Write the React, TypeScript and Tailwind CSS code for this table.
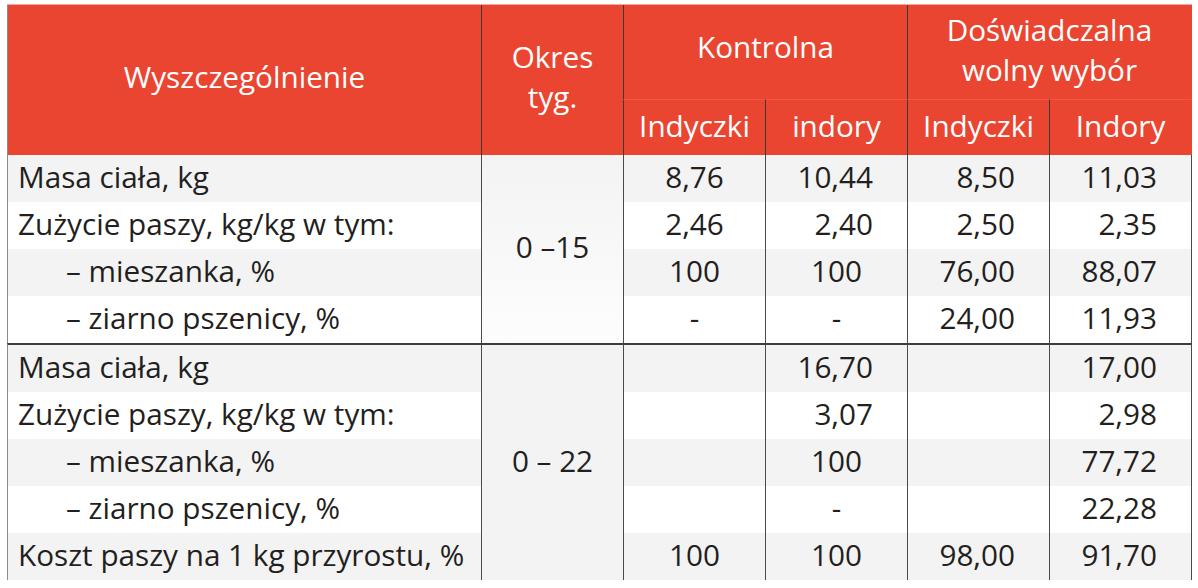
import clsx from 'clsx';

type Row = { label: string; indent?: boolean; vals: string[] };

const group1: Row[] = [
  { label: 'Masa ciała, kg', vals: ['8,76', '10,44', '8,50', '11,03'] },
  { label: 'Zużycie paszy, kg/kg w tym:', vals: ['2,46', '2,40', '2,50', '2,35'] },
  { label: '– mieszanka, %', indent: true, vals: ['100', '100', '76,00', '88,07'] },
  { label: '– ziarno pszenicy, %', indent: true, vals: ['-', '-', '24,00', '11,93'] },
];

const group2: Row[] = [
  { label: 'Masa ciała, kg', vals: ['', '16,70', '', '17,00'] },
  { label: 'Zużycie paszy, kg/kg w tym:', vals: ['', '3,07', '', '2,98'] },
  { label: '– mieszanka, %', indent: true, vals: ['', '100', '', '77,72'] },
  { label: '– ziarno pszenicy, %', indent: true, vals: ['', '-', '', '22,28'] },
  { label: 'Koszt paszy na 1 kg przyrostu, %', vals: ['100', '100', '98,00', '91,70'] },
];

function BodyRows({ rows, period, first }: { rows: Row[]; period: string; first: boolean }) {
  return (
    <>
      {rows.map((r, i) => {
        const bg = i % 2 === 0 ? 'bg-[#f3f3f3]' : 'bg-white';
        const top = !first && i === 0 ? 'border-t-2 border-t-[#3c3c3c]' : '';
        return (
          <div key={r.label + i} className="contents">
            <div
              className={clsx(
                'flex items-center border-l border-l-[#8c8c8c] pb-[3px] whitespace-nowrap',
                r.indent ? 'pl-[58px]' : 'pl-[10px]',
                bg,
                top,
              )}
            >
              {r.label}
            </div>
            {i === 0 && (
              <div
                className={clsx(
                  'flex items-center justify-center border-l border-l-[#4a4a4a] pb-[3px]',
                  first ? 'row-span-4 bg-gradient-to-b from-[#f3f3f3] to-[#fdfdfd]' : 'row-span-5 bg-[#f3f3f3]',
                  top,
                )}
              >
                {period}
              </div>
            )}
            {r.vals.map((v, j) => {
              const right = j > 0 && v.includes(',');
              return (
                <div
                  key={j}
                  className={clsx(
                    'flex items-center border-l border-l-[#4a4a4a] pb-[3px]',
                    right ? 'justify-end pr-[34px]' : 'justify-center',
                    j === 3 && 'border-r border-r-[#4a4a4a]',
                    bg,
                    top,
                  )}
                >
                  {v}
                </div>
              );
            })}
          </div>
        );
      })}
    </>
  );
}

export default function App() {
  return (
    <div className="min-h-[588px] bg-white pl-[7px] pt-[4px] font-['Open_Sans',sans-serif] text-[29.7px] text-[#231f20]">
      <div className="w-[1185px] border-t border-t-[#f2aa9f]">
        <div className="grid grid-cols-[474px_142px_142px_142px_142px_143px] grid-rows-[94px_56px_47px_47px_47px_47px_49px_47px_47px_47px_47px]">
          {/* header */}
          <div className="row-span-2 flex items-center justify-center border-l border-l-[#8c8c8c] bg-[#ea4530] pb-[5px] text-white">
            Wyszczególnienie
          </div>
          <div className="row-span-2 flex flex-col items-center justify-center border-l border-l-[#3a3a3a] bg-[#ea4530] pb-[7px] leading-[40px] text-white">
            <span>Okres</span>
            <span>tyg.</span>
          </div>
          <div className="col-span-2 flex items-center justify-center border-l border-l-[#3a3a3a] bg-[#ea4530] pb-[9px] text-white">
            Kontrolna
          </div>
          <div className="col-span-2 flex flex-col items-center justify-center border-l border-r border-l-[#3a3a3a] border-r-[#ea4530] bg-[#ea4530] pb-[5px] leading-[40px] text-white">
            <span>Doświadczalna</span>
            <span>wolny wybór</span>
          </div>
          <div className="flex items-center justify-center border-l border-t border-l-[#3a3a3a] border-t-[#ef5744] bg-[#ea4530] pb-[2px] text-white">
            Indyczki
          </div>
          <div className="flex items-center justify-center border-l border-t border-l-[#3a3a3a] border-t-[#ef5744] bg-[#ea4530] pb-[2px] text-white">
            indory
          </div>
          <div className="flex items-center justify-center border-l border-t border-l-[#3a3a3a] border-t-[#ef5744] bg-[#ea4530] pb-[2px] text-white">
            Indyczki
          </div>
          <div className="flex items-center justify-center border-l border-r border-t border-l-[#3a3a3a] border-r-[#ea4530] border-t-[#ef5744] bg-[#ea4530] pb-[2px] text-white">
            Indory
          </div>

          <BodyRows rows={group1} period="0 –15" first />
          <BodyRows rows={group2} period="0 – 22" first={false} />
        </div>
      </div>
    </div>
  );
}
